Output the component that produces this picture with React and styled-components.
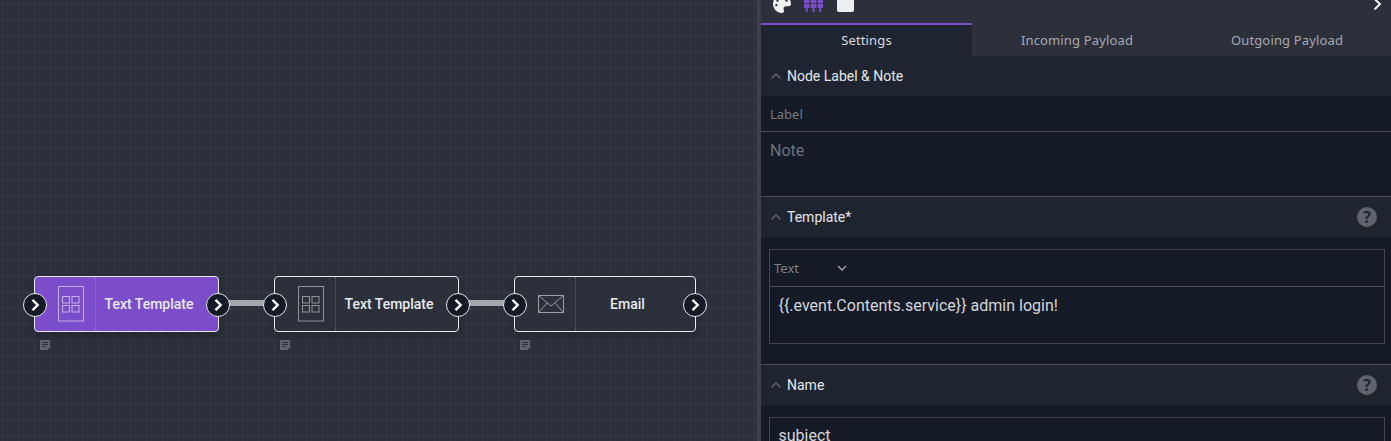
import React from 'react';
import styled, { createGlobalStyle } from 'styled-components';
import { FaPalette } from 'react-icons/fa';

const GlobalStyle = createGlobalStyle`
  html, body { margin: 0; padding: 0; height: 100%; background: #2a303c; overflow: hidden; }
  * { box-sizing: border-box; }
`;

const Page = styled.div`
  display: flex;
  width: 1391px;
  height: 441px;
  overflow: hidden;
  font-family: Roboto, sans-serif;
`;

const Canvas = styled.div`
  position: relative;
  flex: 0 0 761px;
  height: 441px;
  background-color: #2b303b;
  background-image:
    linear-gradient(to right, #343a45 1.5px, transparent 1.5px),
    linear-gradient(to bottom, #343a45 1.5px, transparent 1.5px);
  background-size: 16px 16px;
  background-position: 2px 4px;
  border-right: 4px solid #3a404b;
`;

const NodeBox = styled.div`
  position: absolute;
  top: 276px;
  left: ${(p) => p.$x}px;
  width: ${(p) => p.$w}px;
  height: 56px;
  display: flex;
  align-items: stretch;
  background: ${(p) => (p.$active ? '#7c4dca' : '#2b303b')};
  border: 1px solid #e6e8ec;
  border-radius: 4px;
  box-shadow: 0 4px 10px rgba(0, 0, 0, 0.22);
`;

const NodeIcon = styled.div`
  flex: 0 0 ${(p) => p.$w}px;
  display: flex;
  align-items: center;
  justify-content: center;
  padding-left: ${(p) => p.$pad}px;
  border-right: 1px dotted ${(p) => (p.$active ? '#9678d4' : '#5d626d')};
`;

const NodeLabel = styled.div`
  flex: 1;
  display: flex;
  align-items: center;
  justify-content: center;
  padding-right: 16px;
  color: #e8eaee;
  font-size: 14px;
  font-weight: 500;
`;

const Port = styled.div`
  position: absolute;
  top: 16px;
  ${(p) => (p.$side === 'left' ? 'left: -12px;' : 'right: -12px;')}
  width: 24px;
  height: 24px;
  border-radius: 50%;
  background: #141a26;
  border: 1px solid #e6e8ec;
  display: flex;
  align-items: center;
  justify-content: center;
`;

const Wire = styled.div`
  position: absolute;
  top: 300px;
  left: ${(p) => p.$x}px;
  width: 36px;
  height: 6px;
  background: #a5a8ad;
`;

const NoteMark = styled.svg`
  position: absolute;
  top: 340px;
  left: ${(p) => p.$x}px;
  width: 10px;
  height: 10px;
`;

const Panel = styled.div`
  flex: 1;
  display: flex;
  flex-direction: column;
  height: 441px;
  overflow: hidden;
  background: #141a26;
`;

const Toolbar = styled.div`
  flex: 0 0 23px;
  position: relative;
  display: flex;
  align-items: flex-end;
  background: #2b303b;
  padding: 0 0 11px 12px;
  gap: 13px;
`;

const ToolIcon = styled.div`
  width: ${(p) => p.$w}px;
  height: 12px;
  display: flex;
  align-items: flex-end;
  justify-content: center;
`;

const WhiteSquare = styled.div`
  width: 17px;
  height: 12px;
  margin-left: 1px;
  background: #eceef2;
  border-radius: 0 0 2px 2px;
`;

const CollapseArrow = styled.svg`
  position: absolute;
  right: 9px;
  top: 0;
  width: 9px;
  height: 10px;
`;

const Tabs = styled.div`
  flex: 0 0 33px;
  display: flex;
  background: #2b303b;
`;

const Tab = styled.div`
  flex: 0 0 ${(p) => p.$w}px;
  display: flex;
  align-items: center;
  justify-content: center;
  padding-bottom: 1px;
  font-family: 'Noto Sans', sans-serif;
  font-size: 13px;
  letter-spacing: 0.15px;
  color: ${(p) => (p.$active ? '#d8dade' : '#a6a9b0')};
  background: ${(p) => (p.$active ? '#1f2530' : 'transparent')};
  border-top: 2px solid ${(p) => (p.$active ? '#7c4dca' : 'transparent')};
`;

const SectionHead = styled.div`
  flex: 0 0 40px;
  display: flex;
  align-items: center;
  padding: 0 14px 0 9px;
  background: #1f2530;
  color: #e4e6ea;
  font-family: Roboto, sans-serif;
  font-size: 14px;
`;

const Chevron = styled.svg`
  width: 12px;
  height: 8px;
  margin-right: 5px;
`;

const HeadTitle = styled.span`
  flex: 1;
`;

const HelpIcon = styled.div`
  width: 20px;
  height: 20px;
  border-radius: 50%;
  background: #5f636b;
  color: #1f2530;
  display: flex;
  align-items: center;
  justify-content: center;
  font-family: 'Noto Sans', sans-serif;
  font-weight: 700;
  font-size: 16px;
`;

const LabelRow = styled.div`
  flex: 0 0 36px;
  display: flex;
  align-items: center;
  padding: 1px 9px 0;
  color: #767a83;
  font-family: 'Noto Sans', sans-serif;
  font-size: 13px;
  border-bottom: 1px solid #4a4e58;
`;

const NoteRow = styled.div`
  flex: 0 0 65px;
  padding: 9px 9px 0;
  color: #6d717a;
  font-size: 16px;
  border-bottom: 1px solid #4a4e58;
`;

const SectionBody = styled.div`
  flex: ${(p) => (p.$h ? `0 0 ${p.$h}px` : '1')};
  padding: 12px 6px 0 8px;
  border-bottom: ${(p) => (p.$h ? '1px solid #4a4e58' : 'none')};
`;

const Editor = styled.div`
  height: ${(p) => p.$h}px;
  border: 1px solid #3f444e;
  border-bottom-width: ${(p) => (p.$open ? 0 : 1)}px;
`;

const SelectRow = styled.div`
  height: 37px;
  display: flex;
  align-items: center;
  padding-left: 4px;
  color: #7d8189;
  font-family: 'Noto Sans', sans-serif;
  font-size: 13px;
  border-bottom: 1px solid #4a4e58;
`;

const SelectText = styled.span`
  width: 62px;
`;

const Code = styled.div`
  padding: ${(p) => p.$top}px 8.5px 0;
  color: #d4d6da;
  font-size: 16px;
  line-height: 20px;
`;

const Arrow = () => (
  <svg width="14" height="14" viewBox="0 0 14 14">
    <path d="M4.5 1.8 L9.7 7 L4.5 12.2" fill="none" stroke="#fff" strokeWidth="2.4" />
  </svg>
);

const TemplateIcon = ({ color }) => (
  <svg width="26" height="36" viewBox="0 0 26 36" fill="none" stroke={color} strokeWidth="1">
    <rect x="0.5" y="0.5" width="25" height="34.5" />
    <rect x="4.5" y="10.5" width="7" height="6.5" />
    <rect x="14" y="10.5" width="7" height="6.5" />
    <rect x="4.5" y="19.5" width="7" height="6.5" />
    <rect x="14" y="19.5" width="7" height="6.5" />
  </svg>
);

const MailIcon = () => (
  <svg width="26" height="18" viewBox="0 0 26 18" fill="none" stroke="#9a9da3" strokeWidth="1">
    <rect x="0.5" y="0.5" width="25" height="17" />
    <path d="M0.5 0.5 L13 11 L25.5 0.5 M0.5 17.5 L9 8 M25.5 17.5 L17 8" />
  </svg>
);

const Note = ({ x }) => (
  <NoteMark $x={x} viewBox="0 0 10 10">
    <path d="M1 0 H9 a1 1 0 0 1 1 1 V7.5 L7.5 10 H1 a1 1 0 0 1 -1 -1 V1 a1 1 0 0 1 1 -1 Z" fill="#5f636c" />
    <path d="M2 2.5 H8 M2 4.5 H8 M2 6.5 H5.5" stroke="#2b303b" strokeWidth="1" />
  </NoteMark>
);

const Node = ({ x, w, iconW, pad, active, label, icon }) => (
  <NodeBox $x={x} $w={w} $active={active}>
    <Port $side="left"><Arrow /></Port>
    <NodeIcon $w={iconW} $pad={pad} $active={active}>{icon}</NodeIcon>
    <NodeLabel>{label}</NodeLabel>
    <Port $side="right"><Arrow /></Port>
  </NodeBox>
);

const Section = ({ title, help }) => (
  <SectionHead>
    <Chevron viewBox="0 0 12 8">
      <path d="M1.5 6.5 L6 2 L10.5 6.5" fill="none" stroke="#5f636c" strokeWidth="1.5" />
    </Chevron>
    <HeadTitle>{title}</HeadTitle>
    {help && <HelpIcon>?</HelpIcon>}
  </SectionHead>
);

export default function App() {
  return (
    <Page>
      <GlobalStyle />
      <Canvas>
        <Wire $x={229} />
        <Wire $x={469} />
        <Node x={34} w={185} iconW={61} pad={12} active label="Text Template" icon={<TemplateIcon color="#c4afe8" />} />
        <Node x={274} w={185} iconW={61} pad={12} label="Text Template" icon={<TemplateIcon color="#8f9298" />} />
        <Node x={514} w={182} iconW={61} pad={12} label="Email" icon={<MailIcon />} />
        <Note x={40} />
        <Note x={280} />
        <Note x={520} />
      </Canvas>
      <Panel>
        <Toolbar>
          <ToolIcon $w={18}>
            <FaPalette size={18} color="#f2f3f5" style={{ marginBottom: -1 }} />
          </ToolIcon>
          <ToolIcon $w={19}>
            <svg width="19" height="13" viewBox="0 0 19 13" fill="#7c4dca">
              <path d="M0 0 H5.5 V9 H3.7 V13 H1.8 V9 H0 Z M6.7 0 H12.3 V9 H10.5 V13 H8.5 V9 H6.7 Z M13.5 0 H19 V9 H17.2 V13 H15.3 V9 H13.5 Z" />
              <path d="M0 4.5 H19" stroke="#2b303b" strokeWidth="0.7" />
            </svg>
          </ToolIcon>
          <WhiteSquare />
          <CollapseArrow viewBox="0 0 9 10">
            <path d="M1.5 -1 L7 4 L1.5 9.5" fill="none" stroke="#f2f3f5" strokeWidth="2" />
          </CollapseArrow>
        </Toolbar>
        <Tabs>
          <Tab $active $w={211}>Settings</Tab>
          <Tab $w={210}>Incoming Payload</Tab>
          <Tab $w={210}>Outgoing Payload</Tab>
        </Tabs>
        <Section title="Node Label & Note" />
        <LabelRow>Label</LabelRow>
        <NoteRow>Note</NoteRow>
        <Section title="Template*" help />
        <SectionBody $h={128}>
          <Editor $h={95}>
            <SelectRow>
              <SelectText>Text</SelectText>
              <svg width="12" height="8" viewBox="0 0 12 8">
                <path d="M2 2 L6 6 L10 2" fill="none" stroke="#a6a9b0" strokeWidth="1.4" />
              </svg>
            </SelectRow>
            <Code $top={9}>{'{{.event.Contents.service}} admin login!'}</Code>
          </Editor>
        </SectionBody>
        <Section title="Name" help />
        <SectionBody>
          <Editor $h={60} $open>
            <Code $top={8}>subject</Code>
          </Editor>
        </SectionBody>
      </Panel>
    </Page>
  );
}
